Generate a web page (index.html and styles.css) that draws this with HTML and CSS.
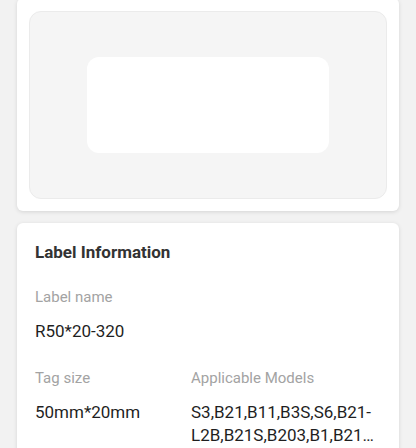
FILE: index.html
```html
<!DOCTYPE html>
<html>
<head>
<meta charset="utf-8">
<link rel="stylesheet" href="styles.css">
</head>
<body>
<div class="page">
  <div class="card preview-card">
    <div class="preview">
      <div class="label-shape"></div>
    </div>
  </div>
  <div class="card info-card">
    <h2 class="title">Label Information</h2>
    <div class="field">
      <div class="key">Label name</div>
      <div class="val">R50*20-320</div>
    </div>
    <div class="row">
      <div class="field">
        <div class="key">Tag size</div>
        <div class="val">50mm*20mm</div>
      </div>
      <div class="field">
        <div class="key">Applicable Models</div>
        <div class="val clamp">S3,B21,B11,B3S,S6,B21-L2B,B21S,B203,B1,B21 Pro,B3S-P,B21-C2B</div>
      </div>
    </div>
  </div>
</div>
</body>
</html>
```
FILE: styles.css
```css
html, body {
  margin: 0;
  padding: 0;
  background: #f2f2f2;
  font-family: Roboto, "Noto Sans", sans-serif;
  overflow: hidden;
}
.page {
  display: flex;
  flex-direction: column;
  gap: 12px;
  padding: 0 17px;
  margin-top: -2px;
}
.card {
  background: #fff;
  border-radius: 6px;
  box-shadow: 0 1px 4px rgba(0,0,0,0.12);
}
.preview-card {
  padding: 13px 12px 12px;
}
.preview {
  height: 188px;
  background: #f5f5f5;
  border: 1px solid #ebebeb;
  border-radius: 12px;
  display: flex;
  justify-content: center;
  padding-top: 45px;
  box-sizing: border-box;
}
.label-shape {
  width: 242px;
  height: 96px;
  background: #fff;
  border-radius: 12px;
}
.info-card {
  padding: 19px 17px 20px 18px;
}
.title {
  margin: 0;
  font-size: 17px;
  font-weight: 700;
  color: #333;
  line-height: 20px;
}
.field {
  margin-top: 26px;
}
.key {
  font-size: 15px;
  color: #a3a3a3;
  line-height: 18px;
}
.val {
  margin-top: 14px;
  font-size: 17px;
  color: #1f1f1f;
  line-height: 23px;
}
.row {
  display: grid;
  grid-template-columns: 156px 1fr;
}
.clamp {
  display: -webkit-box;
  -webkit-line-clamp: 2;
  -webkit-box-orient: vertical;
  overflow: hidden;
}
```
